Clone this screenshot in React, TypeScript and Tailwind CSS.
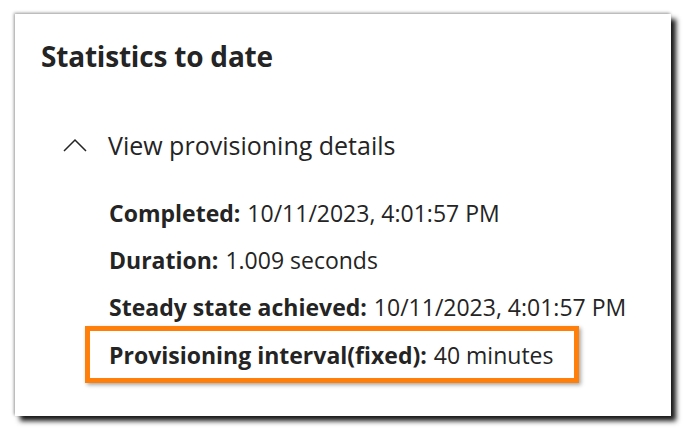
import React from "react";

const rows = [
  { label: "Completed:", value: "10/11/2023, 4:01:57 PM" },
  { label: "Duration:", value: "1.009 seconds" },
  { label: "Steady state achieved:", value: "10/11/2023, 4:01:57 PM" },
];

function ChevronUp() {
  return (
    <svg width="24" height="14" viewBox="0 0 24 14" fill="none" className="shrink-0">
      <path d="M1 13 L12 2 L23 13" stroke="#242424" strokeWidth="1.5" />
    </svg>
  );
}

export default function App() {
  return (
    <div
      className="w-[698px] h-[443px] bg-white pt-[14px] pl-[15px] text-[#242424]"
      style={{ fontFamily: '"Open Sans", "Noto Sans", sans-serif' }}
    >
      <div className="w-[656px] h-[402px] bg-white shadow-[5px_5px_5px_rgba(0,0,0,0.9),-1px_-1px_3px_rgba(0,0,0,0.4)]">
        <h2 className="pl-[26px] pt-[24px] text-[28px] leading-[36px] font-bold tracking-[-0.2px]">
          Statistics to date
        </h2>

        <div className="flex items-center mt-[55px] pl-[48px] h-[32px]">
          <ChevronUp />
          <span className="ml-[21px] text-[25px] leading-[32px]">View provisioning details</span>
        </div>

        <div className="pl-[94px] mt-[37px] flex flex-col">
          {rows.map((r) => (
            <div key={r.label} className="h-[47px] text-[23px] leading-[30px] flex gap-[7px]">
              <span className="font-bold">{r.label}</span>
              <span>{r.value}</span>
            </div>
          ))}
          <div className="-ml-[24px] -mt-[13px] w-[494px] h-[57px] border-[5px] border-[#ff7f0a] shadow-[2px_2px_4px_rgba(0,0,0,0.35)] pl-[19px] flex items-center">
            <div className="text-[23px] leading-[30px] flex gap-[7px]">
              <span className="font-bold">Provisioning interval(fixed):</span>
              <span>40 minutes</span>
            </div>
          </div>
        </div>
      </div>
    </div>
  );
}
